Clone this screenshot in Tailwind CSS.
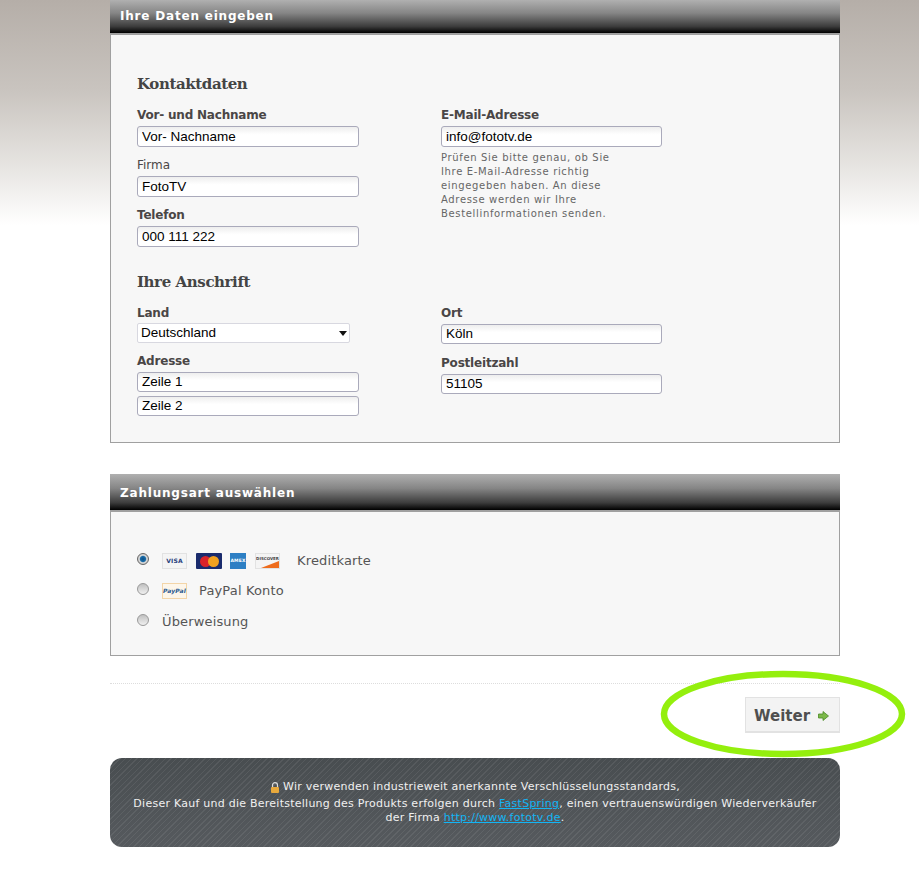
<!DOCTYPE html>
<html lang="de">
<head>
<meta charset="utf-8">
<title>Bestellung</title>
<script src="https://cdn.jsdelivr.net/npm/@tailwindcss/browser@4"></script>
</head>
<body class="relative h-[884px] overflow-hidden bg-white bg-[linear-gradient(to_bottom,#b5aea8_0px,#c9c4bf_90px,#e8e6e3_170px,#ffffff_225px)] bg-no-repeat font-['DejaVu_Sans',sans-serif] text-[#4a4646]">
<main class="ml-[110px] w-[730px]">
  <section>
    <h2 class="flex h-[33px] items-center bg-[linear-gradient(to_bottom,#b0b0b0_0%,#858585_40%,#3c3c3c_80%,#000000_100%)] pb-[2px] pl-[10px] text-[12px] font-bold tracking-[0.8px] text-white">Ihre Daten eingeben</h2>
    <div class="h-[410px] border border-t-2 border-[#a0a0a0] bg-[#f7f7f7] pl-[26px] pt-[38px]">
      <h3 class="h-[22px] font-['DejaVu_Serif',serif] text-[15px] leading-[22px] font-bold tracking-[-0.4px] text-[#444]">Kontaktdaten</h3>
      <div class="mt-[13px] grid h-[148px] grid-cols-[304px_1fr]">
        <div>
          <label class="block h-[15px] text-[12px] leading-[15px] font-bold tracking-[-0.2px]">Vor- und Nachname</label>
          <input value="Vor- Nachname" class="mt-[3px] block h-[21px] w-[222px] rounded-[3px] border border-[#aaaabb] bg-[linear-gradient(to_bottom,#eeeeee,#ffffff_40%)] px-[4px] font-['Liberation_Sans',sans-serif] text-[13.5px] text-black">
          <label class="mt-[11px] block h-[15px] text-[12px] leading-[15px]">Firma</label>
          <input value="FotoTV" class="mt-[3px] block h-[21px] w-[222px] rounded-[3px] border border-[#aaaabb] bg-[linear-gradient(to_bottom,#eeeeee,#ffffff_40%)] px-[4px] font-['Liberation_Sans',sans-serif] text-[13.5px] text-black">
          <label class="mt-[11px] block h-[15px] text-[12px] leading-[15px] font-bold tracking-[-0.2px]">Telefon</label>
          <input value="000 111 222" class="mt-[3px] block h-[21px] w-[222px] rounded-[3px] border border-[#aaaabb] bg-[linear-gradient(to_bottom,#eeeeee,#ffffff_40%)] px-[4px] font-['Liberation_Sans',sans-serif] text-[13.5px] text-black">
        </div>
        <div>
          <label class="block h-[15px] text-[12px] leading-[15px] font-bold tracking-[-0.2px]">E-Mail-Adresse</label>
          <input value="info@fototv.de" class="mt-[3px] block h-[21px] w-[221px] rounded-[3px] border border-[#aaaabb] bg-[linear-gradient(to_bottom,#eeeeee,#ffffff_40%)] px-[4px] font-['Liberation_Sans',sans-serif] text-[13.5px] text-black">
          <p class="mt-[4px] w-[200px] text-[10px] leading-[14px] tracking-[0.66px] text-[#666]">Prüfen Sie bitte genau, ob Sie<br>Ihre E-Mail-Adresse richtig<br>eingegeben haben. An diese<br>Adresse werden wir Ihre<br>Bestellinformationen senden.</p>
        </div>
      </div>
      <h3 class="mt-[15px] h-[22px] font-['DejaVu_Serif',serif] text-[15px] leading-[22px] font-bold tracking-[-0.4px] text-[#444]">Ihre Anschrift</h3>
      <div class="mt-[13px] grid grid-cols-[304px_1fr]">
        <div>
          <label class="block h-[15px] text-[12px] leading-[15px] font-bold tracking-[-0.2px]">Land</label>
          <div class="mt-[2px] flex h-[20px] w-[213px] items-center justify-between rounded-[2px] border border-[#d8d8e0] bg-white pl-[3px] pr-[2px] font-['Liberation_Sans',sans-serif] text-[13.5px] text-black">
            <span>Deutschland</span>
            <svg width="8" height="5" viewBox="0 0 8 5" aria-hidden="true"><path d="M0 0h8L4 5z" fill="#111"/></svg>
          </div>
          <label class="mt-[11px] block h-[15px] text-[12px] leading-[15px] font-bold tracking-[-0.2px]">Adresse</label>
          <input value="Zeile 1" class="mt-[3px] block h-[20px] w-[222px] rounded-[3px] border border-[#aaaabb] bg-[linear-gradient(to_bottom,#eeeeee,#ffffff_40%)] px-[4px] font-['Liberation_Sans',sans-serif] text-[13.5px] text-black">
          <input value="Zeile 2" class="mt-[4px] block h-[20px] w-[222px] rounded-[3px] border border-[#aaaabb] bg-[linear-gradient(to_bottom,#eeeeee,#ffffff_40%)] px-[4px] font-['Liberation_Sans',sans-serif] text-[13.5px] text-black">
        </div>
        <div>
          <label class="block h-[15px] text-[12px] leading-[15px] font-bold tracking-[-0.2px]">Ort</label>
          <input value="Köln" class="mt-[3px] block h-[20px] w-[221px] rounded-[3px] border border-[#aaaabb] bg-[linear-gradient(to_bottom,#eeeeee,#ffffff_40%)] px-[4px] font-['Liberation_Sans',sans-serif] text-[13.5px] text-black">
          <label class="mt-[12px] block h-[15px] text-[12px] leading-[15px] font-bold tracking-[-0.2px]">Postleitzahl</label>
          <input value="51105" class="mt-[3px] block h-[20px] w-[221px] rounded-[3px] border border-[#aaaabb] bg-[linear-gradient(to_bottom,#eeeeee,#ffffff_40%)] px-[4px] font-['Liberation_Sans',sans-serif] text-[13.5px] text-black">
        </div>
      </div>
    </div>
  </section>

  <section class="mt-[31px]">
    <h2 class="flex h-[36px] items-center bg-[linear-gradient(to_bottom,#b0b0b0_0%,#858585_40%,#3c3c3c_80%,#000000_100%)] pt-[1px] pl-[10px] text-[12px] font-bold tracking-[0.8px] text-white">Zahlungsart auswählen</h2>
    <div class="flex h-[146px] flex-col border border-t-2 border-[#a0a0a0] bg-[#f7f7f7] pl-[26px] pt-[39px] text-[13px] tracking-[0.15px] text-[#555]">
      <div class="flex h-[20px] items-center">
        <span class="-mt-[4px] h-[12px] w-[12px] rounded-full border border-[#666] bg-[radial-gradient(circle,#0b4f86_0%,#1a6ca8_38%,#d8d8d8_52%,#bbbbbb_100%)]"></span>
        <span class="ml-[13px] flex h-[16px] w-[25px] items-center justify-center border border-[#e2e2e2] bg-[#f4f4f4] text-[6px] leading-none font-bold text-[#27407c]">VISA</span>
        <span class="relative ml-[9px] flex h-[16px] w-[26px] items-center justify-center rounded-[1px] bg-[#1a2b6d]" aria-hidden="true">
          <span class="h-[11px] w-[11px] rounded-full bg-[#d9222a]"></span>
          <span class="ml-[-3px] h-[11px] w-[11px] rounded-full bg-[#f2a11f]"></span>
        </span>
        <span class="ml-[8px] flex h-[16px] w-[16px] items-center justify-center bg-[#2d7fc4] text-[4.5px] leading-none font-bold text-white">AMEX</span>
        <span class="relative ml-[9px] flex h-[16px] w-[25px] items-start justify-center overflow-hidden border border-[#e2e2e2] bg-[#f4f4f4] pt-[3px] text-[4px] leading-none font-bold tracking-normal text-[#444]">DISCOVER<span class="absolute right-0 bottom-0 h-[7px] w-[18px] bg-[#ee6c1c] [clip-path:polygon(100%_0,100%_100%,0_100%)]"></span></span>
        <span class="ml-[17px]">Kreditkarte</span>
      </div>
      <div class="mt-[10px] flex h-[20px] items-center">
        <span class="-mt-[4px] h-[12px] w-[12px] rounded-full border border-[#999] bg-[linear-gradient(to_bottom,#c0c0c0,#f0f0f0)]"></span>
        <span class="ml-[13px] flex h-[16px] w-[25px] items-center justify-center border border-[#f3d5a8] bg-[#fdf6ea] text-[6px] leading-none font-bold text-[#27578f] italic">PayPal</span>
        <span class="ml-[12px]">PayPal Konto</span>
      </div>
      <div class="mt-[11px] flex h-[20px] items-center">
        <span class="-mt-[4px] h-[12px] w-[12px] rounded-full border border-[#999] bg-[linear-gradient(to_bottom,#c0c0c0,#f0f0f0)]"></span>
        <span class="ml-[13px]">Überweisung</span>
      </div>
    </div>
  </section>

  <div class="mt-[27px] border-t border-dotted border-[#dddddd]"></div>
  <div class="mt-[13px] flex justify-end">
    <button class="flex h-[36px] w-[95px] items-center gap-[8px] border border-b-2 border-[#e2e2e2] bg-[#f3f3f3] pt-[3px] pl-[8px] text-[15px] font-bold text-[#4f4f4f]">Weiter
      <svg width="11" height="10" viewBox="0 0 11 10" aria-hidden="true"><path d="M0.5 3h4.5V0.5L10.5 5 5 9.5V7H0.5z" fill="#7cb84a" stroke="#4a8a25" stroke-width="0.8"/></svg>
    </button>
  </div>
  <footer class="mt-[25px] flex h-[89px] flex-col items-center rounded-[12px] bg-[repeating-linear-gradient(135deg,transparent_0px,transparent_3px,rgba(255,255,255,0.07)_3px,rgba(255,255,255,0.07)_4px),linear-gradient(to_bottom,#484d50,#565a5e)] px-[12px] pt-[22px] text-center text-[11px] leading-[14px] tracking-[0.25px] text-[#f0f0f0]">
    <p class="flex items-center justify-center gap-[3px]">
      <svg width="10" height="11" viewBox="0 0 10 11" aria-hidden="true"><path d="M2.5 5V3.2a2.5 2.5 0 0 1 5 0V5" fill="none" stroke="#ddd" stroke-width="1.2"/><rect x="1" y="5" width="8" height="6" rx="1" fill="#e8a93c"/></svg>
      <span>Wir verwenden industrieweit anerkannte Verschlüsselungsstandards,</span>
    </p>
    <p class="mt-[3px]">Dieser Kauf und die Bereitstellung des Produkts erfolgen durch <a href="#" class="text-[#12b5f5] underline">FastSpring</a>, einen vertrauenswürdigen Wiederverkäufer<br>der Firma <a href="#" class="text-[#12b5f5] underline">http://www.fototv.de</a>.</p>
  </footer>
</main>
<svg class="pointer-events-none absolute top-[668px] left-[658px] blur-[0.6px]" width="250" height="92" viewBox="0 0 250 92" aria-hidden="true"><ellipse cx="125" cy="46" rx="119" ry="40" fill="none" stroke="#8eee00" stroke-width="6.5" opacity="0.95"/></svg>
</body>
</html>
